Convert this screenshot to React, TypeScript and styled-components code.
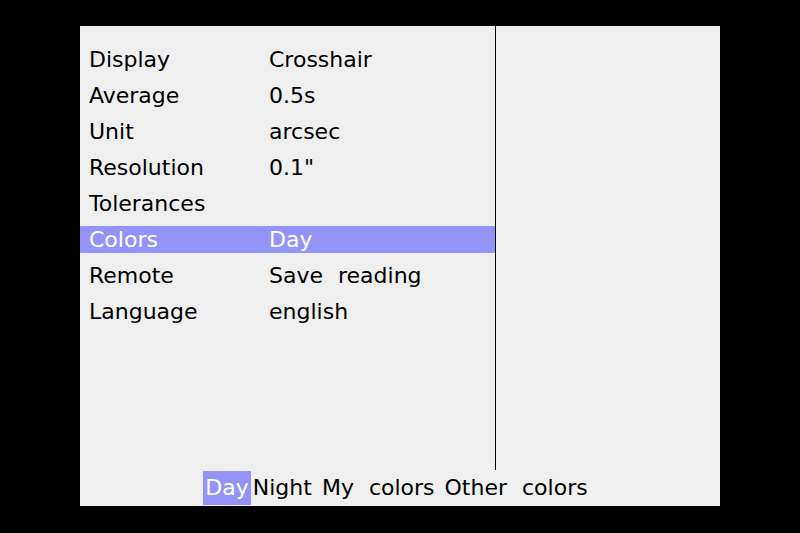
import styled, { createGlobalStyle } from "styled-components";

const GlobalStyle = createGlobalStyle`
  html, body {
    margin: 0;
    padding: 0;
    background: #000;
  }
  body {
    width: 800px;
    height: 533px;
    overflow: hidden;
    font-family: "DejaVu Sans", "Liberation Sans", sans-serif;
  }
`;

const Screen = styled.div`
  width: 640px;
  height: 480px;
  margin: 26px 0 0 80px;
  background: #efefef;
  display: flex;
  flex-direction: column;
  color: #000;
  font-size: 22px;
`;

const Main = styled.div`
  display: flex;
  height: 444px;
`;

const Menu = styled.div`
  width: 415px;
  border-right: 1px solid #000;
  padding-top: 20px;
  display: flex;
  flex-direction: column;
  gap: 9px;
`;

const Row = styled.div<{ $active?: boolean }>`
  display: flex;
  height: 27px;
  line-height: 27px;
  background: ${(p) => (p.$active ? "#9494f8" : "transparent")};
  color: ${(p) => (p.$active ? "#fff" : "#000")};
`;

const Label = styled.span`
  width: 189px;
  padding-left: 9px;
  box-sizing: border-box;
`;

const Value = styled.span`
  word-spacing: 8px;
`;

const Side = styled.div`
  flex: 1;
`;

const Options = styled.div`
  flex: 1;
  display: flex;
  justify-content: center;
  align-items: flex-start;
  padding: 1px 7px 0 0;
`;

const Option = styled.span<{ $active?: boolean; $tight?: boolean }>`
  height: 34px;
  line-height: 33px;
  padding: 0 2px;
  margin-left: ${(p) => (p.$tight ? 0 : 6)}px;
  word-spacing: 8px;
  background: ${(p) => (p.$active ? "#9494f8" : "transparent")};
  color: ${(p) => (p.$active ? "#fff" : "#000")};
`;

const rows = [
  ["Display", "Crosshair"],
  ["Average", "0.5s"],
  ["Unit", "arcsec"],
  ["Resolution", '0.1"'],
  ["Tolerances", ""],
  ["Colors", "Day"],
  ["Remote", "Save reading"],
  ["Language", "english"],
];

const options = ["Day", "Night", "My colors", "Other colors"];
const selected = 0;

export default function App() {
  return (
    <>
      <GlobalStyle />
      <Screen>
        <Main>
          <Menu>
            {rows.map(([label, value]) => (
              <Row key={label} $active={label === "Colors"}>
                <Label>{label}</Label>
                <Value>{value}</Value>
              </Row>
            ))}
          </Menu>
          <Side />
        </Main>
        <Options>
          {options.map((o, i) => (
            <Option key={o} $active={i === selected} $tight={i === 0 || i === selected + 1}>
              {o}
            </Option>
          ))}
        </Options>
      </Screen>
    </>
  );
}
